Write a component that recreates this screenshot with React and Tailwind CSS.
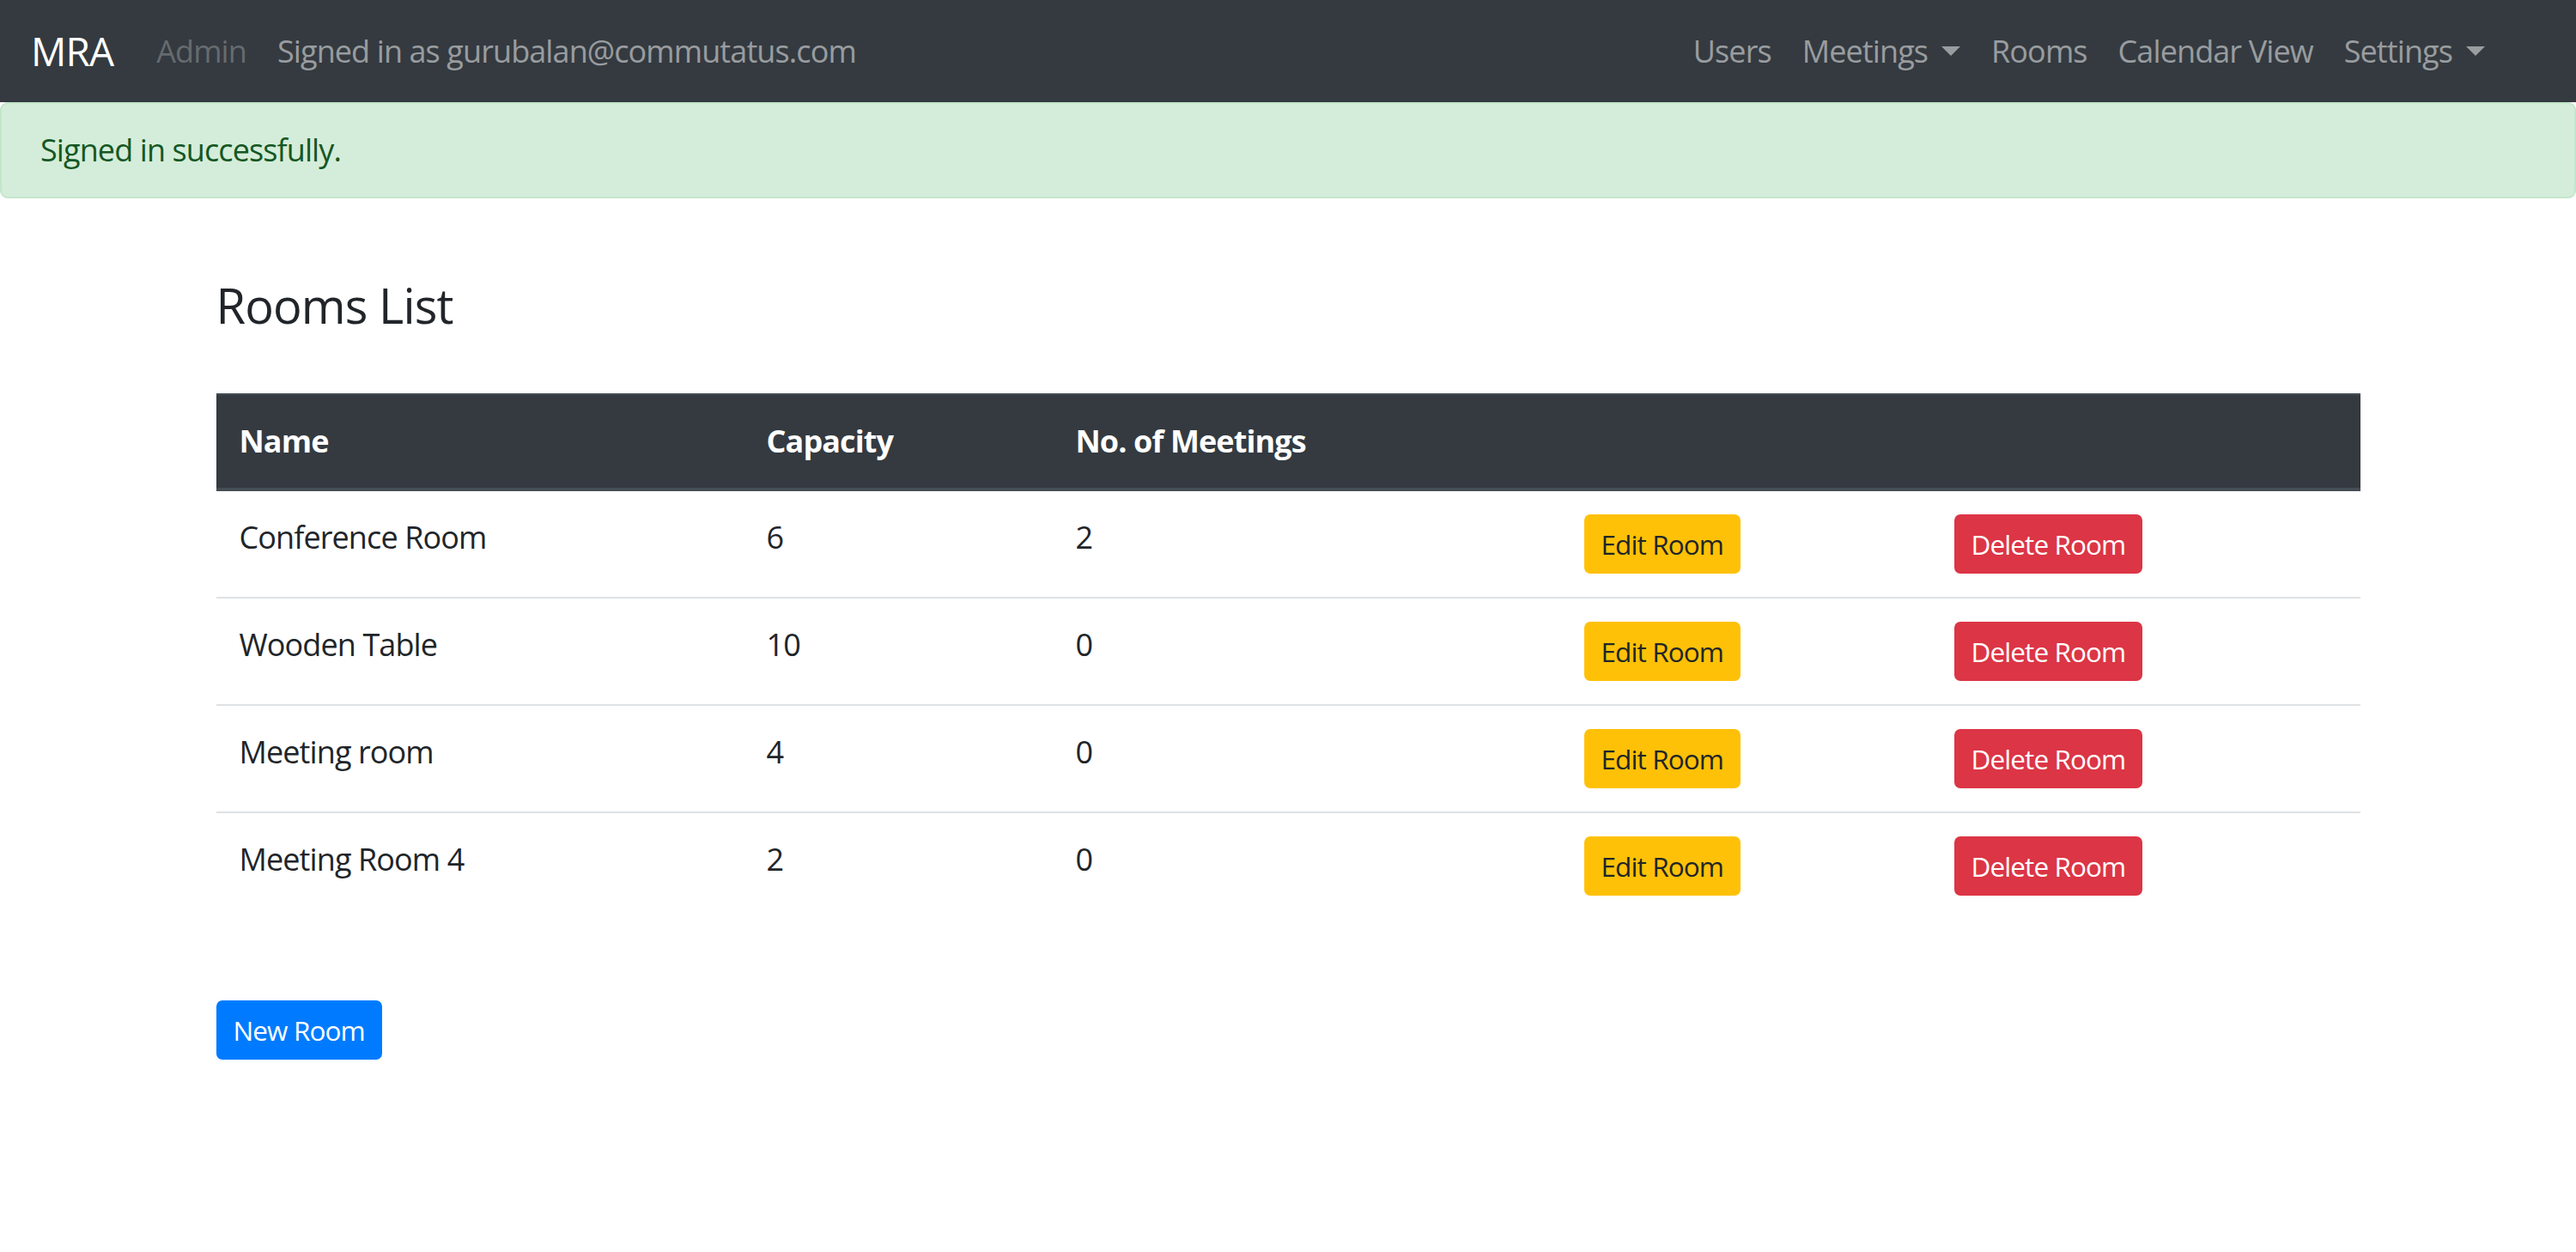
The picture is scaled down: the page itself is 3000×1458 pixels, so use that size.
import React from 'react'

const ROOMS = [
  { name: 'Conference Room', capacity: 6, meetings: 2 },
  { name: 'Wooden Table', capacity: 10, meetings: 0 },
  { name: 'Meeting room', capacity: 4, meetings: 0 },
  { name: 'Meeting Room 4', capacity: 2, meetings: 0 },
]

function Caret() {
  return <span className="inline-block ml-[16px] align-[8px] border-t-[11px] border-x-[11px] border-b-0 border-x-transparent" />
}

function NavLink({ children, caret, muted }) {
  return (
    <a className={`px-[18px] leading-[54px] ${muted ? 'text-white/25' : 'text-white/50'}`}>
      {children}
      {caret && <Caret />}
    </a>
  )
}

const cell = (i) => `p-[27px] align-top ${i > 0 ? 'border-t-2 border-[#dee2e6]' : ''}`

export default function App() {
  return (
    <div className="min-h-[1458px] bg-white text-[#212529] font-['Open_Sans',sans-serif] text-[36px] tracking-[-0.025em]">
      <nav className="h-[119px] bg-[#343a40] flex items-center pl-[36px] pr-[88px]">
        <a className="text-white text-[46px] leading-[69px] mr-[32px]">MRA</a>
        <NavLink muted>Admin</NavLink>
        <NavLink>Signed in as gurubalan@commutatus.com</NavLink>
        <div className="ml-auto flex items-center">
          <NavLink>Users</NavLink>
          <NavLink caret>Meetings</NavLink>
          <NavLink>Rooms</NavLink>
          <NavLink>Calendar View</NavLink>
          <NavLink caret>Settings</NavLink>
        </div>
      </nav>

      <div className="h-[112px] bg-[#d4edda] border-2 border-[#c3e6cb] rounded-[9px] px-[45px] py-[27px] leading-[54px] text-[#155724]">
        Signed in successfully.
      </div>

      <main className="w-[2497px] mx-auto pt-[91px]">
        <h3 className="text-[56px] leading-[67px] font-normal">Rooms List</h3>

        <table className="mt-[69px] w-full table-fixed border-collapse leading-[54px]">
          <colgroup>
            <col className="w-[614px]" />
            <col className="w-[360px]" />
            <col className="w-[592px]" />
            <col className="w-[431px]" />
            <col className="w-[500px]" />
          </colgroup>
          <thead className="bg-[#343a40] text-white">
            <tr>
              {['Name', 'Capacity', 'No. of Meetings', '', ''].map((h, i) => (
                <th key={i} className="text-left font-bold p-[27px] border-t-2 border-b-4 border-[#454d55]">{h}</th>
              ))}
            </tr>
          </thead>
          <tbody>
            {ROOMS.map((r, i) => (
              <tr key={r.name}>
                <td className={cell(i)}>{r.name}</td>
                <td className={cell(i)}>{r.capacity}</td>
                <td className={cell(i)}>{r.meetings}</td>
                <td className={cell(i)}>
                  <button className="bg-[#ffc107] text-[#212529] text-[31.5px] leading-[47px] px-[18px] py-[9px] border-2 border-[#ffc107] rounded-[7px]">Edit Room</button>
                </td>
                <td className={cell(i)}>
                  <button className="bg-[#dc3545] text-white text-[31.5px] leading-[47px] px-[18px] py-[9px] border-2 border-[#dc3545] rounded-[7px]">Delete Room</button>
                </td>
              </tr>
            ))}
          </tbody>
        </table>

        <button className="mt-[95px] bg-[#007bff] text-white text-[31.5px] leading-[47px] px-[18px] py-[9px] border-2 border-[#007bff] rounded-[7px]">New Room</button>
      </main>
    </div>
  )
}
